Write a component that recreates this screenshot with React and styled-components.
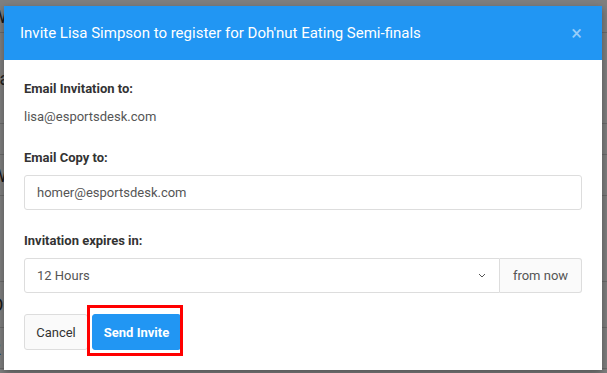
import React from "react";
import styled, { createGlobalStyle } from "styled-components";

const GlobalStyle = createGlobalStyle`
  html, body {
    margin: 0;
    padding: 0;
    width: 607px;
    height: 373px;
    overflow: hidden;
    font-family: Roboto, "Liberation Sans", Arial, sans-serif;
  }
`;

const Page = styled.div`
  position: relative;
  width: 607px;
  height: 373px;
  background: #fff;
  overflow: hidden;
`;

const BgRow = styled.div`
  height: ${(p) => p.h}px;
  border-bottom: 1px solid #d6d6d6;
  display: flex;
  align-items: center;
  margin-left: -9px;
  font-size: 18px;
  color: ${(p) => p.color || "#333"};
`;

const Overlay = styled.div`
  position: absolute;
  inset: 0;
  background: rgba(0, 0, 0, 0.5);
`;

const Modal = styled.div`
  position: absolute;
  left: 4px;
  top: 6px;
  width: 598px;
  background: #fff;
  box-shadow: 0 3px 8px rgba(0, 0, 0, 0.35);
`;

const Header = styled.div`
  height: 54px;
  background: #2196f3;
  display: flex;
  align-items: center;
  justify-content: space-between;
  padding: 0 20px 0 16px;
`;

const Title = styled.h4`
  margin: 0;
  font-size: 15px;
  font-weight: 400;
  color: #fff;
`;

const Close = styled.span`
  color: rgba(255, 255, 255, 0.55);
  font-size: 20px;
  line-height: 1;
`;

const Body = styled.div`
  padding: 20px 20px 20px;
`;

const Label = styled.div`
  font-size: 13px;
  font-weight: 700;
  line-height: 18px;
  color: #333;
  margin-bottom: ${(p) => p.mb ?? 8}px;
`;

const Value = styled.div`
  font-size: 13px;
  line-height: 18px;
  color: #555;
  margin-bottom: 23px;
`;

const Input = styled.div`
  height: 35px;
  box-sizing: border-box;
  border: 1px solid #ddd;
  border-radius: 3px;
  display: flex;
  align-items: center;
  padding: 0 12px;
  font-size: 13px;
  color: #555;
  margin-bottom: 22px;
`;

const Group = styled.div`
  display: flex;
  height: 35px;
  margin-bottom: 21px;
`;

const Select = styled.div`
  flex: 1;
  box-sizing: border-box;
  border: 1px solid #ddd;
  border-radius: 3px 0 0 3px;
  display: flex;
  align-items: center;
  justify-content: space-between;
  padding: 0 13px 0 12px;
  font-size: 13px;
  color: #555;
`;

const Addon = styled.div`
  width: 82px;
  box-sizing: border-box;
  border: 1px solid #ddd;
  border-left: none;
  border-radius: 0 3px 3px 0;
  background: #fafafa;
  display: flex;
  align-items: center;
  justify-content: center;
  font-size: 13px;
  color: #555;
`;

const Actions = styled.div`
  display: flex;
  gap: 4px;
  align-items: center;
`;

const Button = styled.button`
  position: relative;
  height: 36px;
  padding: 0;
  width: ${(p) => p.w}px;
  border-radius: 3px;
  font-family: inherit;
  font-size: 13px;
  font-weight: ${(p) => (p.primary ? 700 : 400)};
  color: ${(p) => (p.primary ? "#fff" : "#333")};
  background: ${(p) => (p.primary ? "#2196f3" : "#fafafa")};
  border: 1px solid ${(p) => (p.primary ? "#2196f3" : "#ddd")};
`;

const Highlight = styled.span`
  position: absolute;
  left: -6px;
  right: -3px;
  top: -10px;
  bottom: -7px;
  border: 3px solid #ff0000;
  pointer-events: none;
`;

export default function App() {
  return (
    <Page>
      <GlobalStyle />
      <BgRow h={32}>W</BgRow>
      <BgRow h={90} color="#444">va</BgRow>
      <BgRow h={30} />
      <BgRow h={40} color="#333">W</BgRow>
      <BgRow h={85} color="#b58100">il</BgRow>
      <BgRow h={45} color="#333">O</BgRow>
      <BgRow h={40} color="#1e6fd0">2</BgRow>
      <Overlay />
      <Modal>
        <Header>
          <Title>Invite Lisa Simpson to register for Doh'nut Eating Semi-finals</Title>
          <Close>×</Close>
        </Header>
        <Body>
          <Label mb={10}>Email Invitation to:</Label>
          <Value>lisa@esportsdesk.com</Value>
          <Label>Email Copy to:</Label>
          <Input>homer@esportsdesk.com</Input>
          <Label>Invitation expires in:</Label>
          <Group>
            <Select>
              <span>12 Hours</span>
              <svg width="8" height="5" viewBox="0 0 8 5">
                <path d="M1 1l3 3 3-3" fill="none" stroke="#555" strokeWidth="1" />
              </svg>
            </Select>
            <Addon>from now</Addon>
          </Group>
          <Actions>
            <Button w={64}>Cancel</Button>
            <Button w={89} primary>
              Send Invite
              <Highlight />
            </Button>
          </Actions>
        </Body>
      </Modal>
    </Page>
  );
}
